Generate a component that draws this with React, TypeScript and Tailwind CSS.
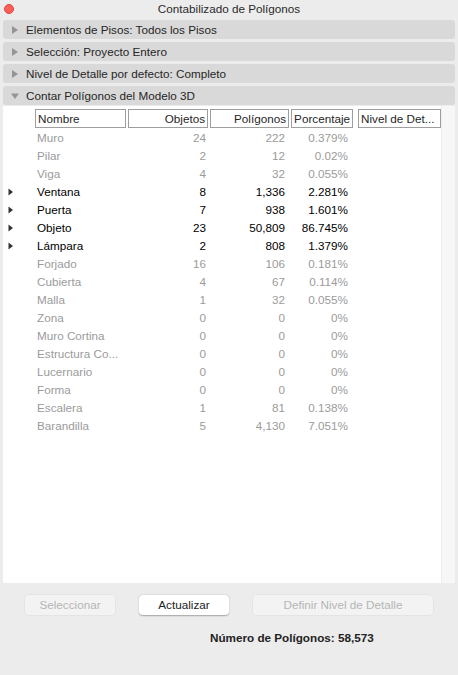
import React from "react";

type Row = { name: string; obj: string; pol: string; pct: string; active?: boolean };

const rows: Row[] = [
  { name: "Muro", obj: "24", pol: "222", pct: "0.379%" },
  { name: "Pilar", obj: "2", pol: "12", pct: "0.02%" },
  { name: "Viga", obj: "4", pol: "32", pct: "0.055%" },
  { name: "Ventana", obj: "8", pol: "1,336", pct: "2.281%", active: true },
  { name: "Puerta", obj: "7", pol: "938", pct: "1.601%", active: true },
  { name: "Objeto", obj: "23", pol: "50,809", pct: "86.745%", active: true },
  { name: "Lámpara", obj: "2", pol: "808", pct: "1.379%", active: true },
  { name: "Forjado", obj: "16", pol: "106", pct: "0.181%" },
  { name: "Cubierta", obj: "4", pol: "67", pct: "0.114%" },
  { name: "Malla", obj: "1", pol: "32", pct: "0.055%" },
  { name: "Zona", obj: "0", pol: "0", pct: "0%" },
  { name: "Muro Cortina", obj: "0", pol: "0", pct: "0%" },
  { name: "Estructura Co...", obj: "0", pol: "0", pct: "0%" },
  { name: "Lucernario", obj: "0", pol: "0", pct: "0%" },
  { name: "Forma", obj: "0", pol: "0", pct: "0%" },
  { name: "Escalera", obj: "1", pol: "81", pct: "0.138%" },
  { name: "Barandilla", obj: "5", pol: "4,130", pct: "7.051%" },
];

const sections = [
  { label: "Elementos de Pisos: Todos los Pisos", open: false },
  { label: "Selección: Proyecto Entero", open: false },
  { label: "Nivel de Detalle por defecto: Completo", open: false },
  { label: "Contar Polígonos del Modelo 3D", open: true },
];

function Disclosure({ open }: { open: boolean }) {
  return (
    <svg width="10" height="10" viewBox="0 0 10 10" className="shrink-0">
      {open ? <path d="M1 2.5 L9 2.5 L5 8 Z" fill="#959595" /> : <path d="M2 1 L8 5 L2 9 Z" fill="#959595" />}
    </svg>
  );
}

export default function App() {
  return (
    <div
      className="w-[458px] h-[675px] bg-[#ececec] flex flex-col text-[11.7px] text-[#262626] overflow-hidden"
      style={{ fontFamily: "'Liberation Sans', Arial, sans-serif" }}
    >
      <div className="h-[18px] relative flex items-center justify-center text-[#2a2a2a]">
        <span className="absolute left-[4px] top-[4px] w-[10px] h-[10px] rounded-full bg-[#fc5f57] border border-[#e0443e]" />
        Contabilizado de Polígonos
      </div>

      <div className="flex flex-col gap-[3px] px-[3px] mt-[2px]">
        {sections.map((s) => (
          <div key={s.label} className="h-[19px] rounded-[3px] bg-[#d9d9d9] flex items-center pl-[7px] gap-[6px]">
            <Disclosure open={s.open} />
            <span>{s.label}</span>
          </div>
        ))}
      </div>

      <div className="mx-[3px] mt-[1px] h-[477px] bg-white flex">
        <div className="flex-1 flex flex-col">
          <div className="flex h-[22px] items-center pt-[3px] pl-[32px] gap-[2px] whitespace-nowrap">
            <div className="w-[91px] h-[19px] border border-[#9e9e9e] flex items-center px-[2px]">Nombre</div>
            <div className="w-[80px] h-[19px] border border-[#9e9e9e] flex items-center justify-end px-[2px]">Objetos</div>
            <div className="w-[79px] h-[19px] border border-[#9e9e9e] flex items-center justify-end px-[2px]">Polígonos</div>
            <div className="w-[62px] h-[19px] border border-[#9e9e9e] flex items-center justify-end px-[2px]">Porcentaje</div>
            <div className="w-[83px] h-[19px] border border-[#9e9e9e] flex items-center px-[2px] ml-[3px]">Nivel de Det...</div>
          </div>
          <div className="flex flex-col mt-[1px]">
            {rows.map((r) => (
              <div
                key={r.name}
                className={`flex h-[18px] items-center ${r.active ? "text-black" : "text-[#9b9b9b]"}`}
              >
                <div className="w-[32px] flex items-center pl-[5px]">
                  {r.active && (
                    <svg width="6" height="8" viewBox="0 0 6 8">
                      <path d="M0.5 0.5 L5 4 L0.5 7.5 Z" fill="#333" />
                    </svg>
                  )}
                </div>
                <div className="w-[92px] pl-[2px] whitespace-nowrap">{r.name}</div>
                <div className="w-[79px] text-right">{r.obj}</div>
                <div className="w-[79px] text-right">{r.pol}</div>
                <div className="w-[63px] text-right">{r.pct}</div>
              </div>
            ))}
          </div>
        </div>
        <div className="w-[14px] bg-[#f7f7f7] border-l border-[#ededed]" />
      </div>

      <div className="flex items-center mt-[12px] pl-[25px] gap-[24px]">
        <div className="w-[90px] h-[20px] rounded-[4px] bg-[#f3f3f3] text-[#b5b5b5] flex items-center justify-center shadow-[0_0_0_0.5px_#dcdcdc]">
          Seleccionar
        </div>
        <div className="w-[90px] h-[20px] rounded-[4px] bg-white text-[#222] flex items-center justify-center shadow-[0_0.5px_1.5px_rgba(0,0,0,0.3)]">
          Actualizar
        </div>
        <div className="w-[180px] h-[20px] rounded-[4px] bg-[#f3f3f3] text-[#b5b5b5] flex items-center justify-center shadow-[0_0_0_0.5px_#dcdcdc]">
          Definir Nivel de Detalle
        </div>
      </div>

      <div className="mt-[14px] pl-[210px] font-bold text-[#222]">Número de Polígonos: 58,573</div>
    </div>
  );
}
